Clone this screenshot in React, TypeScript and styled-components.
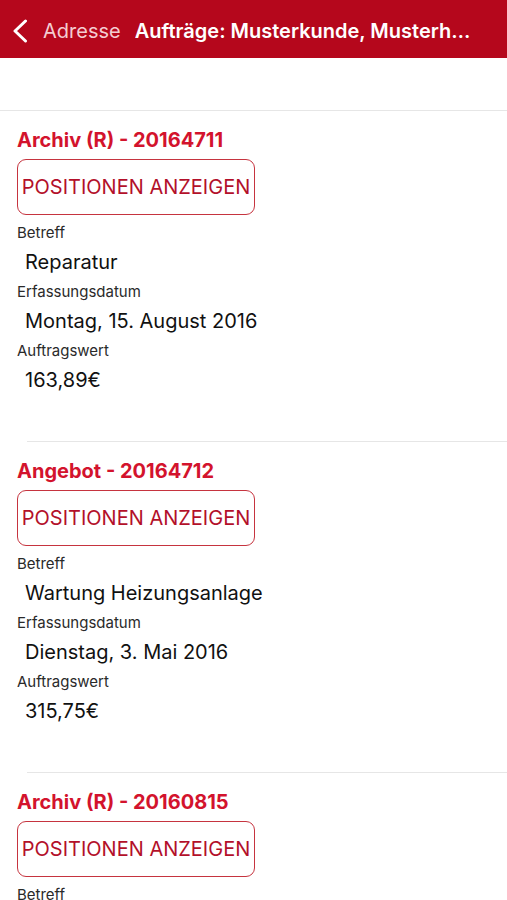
import { Fragment } from "react";
import styled, { createGlobalStyle } from "styled-components";

type Order = {
  id: string;
  kind: string;
  subject: string;
  date: string;
  value: string;
};

const orders: Order[] = [
  { id: "20164711", kind: "Archiv (R)", subject: "Reparatur", date: "Montag, 15. August 2016", value: "163,89€" },
  { id: "20164712", kind: "Angebot", subject: "Wartung Heizungsanlage", date: "Dienstag, 3. Mai 2016", value: "315,75€" },
  { id: "20160815", kind: "Archiv (R)", subject: "Inspektion", date: "Freitag, 12. Februar 2016", value: "98,40€" },
];

const GlobalStyle = createGlobalStyle`
  html, body {
    margin: 0;
    padding: 0;
    background: #ffffff;
    font-family: Inter, "Liberation Sans", sans-serif;
    -webkit-font-smoothing: antialiased;
  }
`;

const App = () => {
  return (
    <Screen>
      <GlobalStyle />
      <NavBar>
        <BackButton>
          <svg width="16" height="24" viewBox="0 0 16 24">
            <path d="M13.5 2 L3 12 L13.5 22" fill="none" stroke="#ffffff" strokeWidth="3" strokeLinecap="round" strokeLinejoin="round" />
          </svg>
          <span>Adresse</span>
        </BackButton>
        <NavTitle>Aufträge: Musterkunde, Musterhausen GmbH</NavTitle>
      </NavBar>

      <Spacer />

      <List>
        {orders.map((order, index) => (
          <Fragment key={order.id}>
            {index > 0 && <Divider />}
            <OrderItem>
              <OrderTitle>
                {order.kind} - {order.id}
              </OrderTitle>
              <OutlineButton>POSITIONEN ANZEIGEN</OutlineButton>
              <FieldLabel>Betreff</FieldLabel>
              <FieldValue>{order.subject}</FieldValue>
              <FieldLabel>Erfassungsdatum</FieldLabel>
              <FieldValue>{order.date}</FieldValue>
              <FieldLabel>Auftragswert</FieldLabel>
              <FieldValue>{order.value}</FieldValue>
            </OrderItem>
          </Fragment>
        ))}
      </List>
    </Screen>
  );
};

const Screen = styled.div`
  width: 507px;
  height: 900px;
  overflow: hidden;
  background: #ffffff;
`;

const NavBar = styled.header`
  height: 58px;
  background: #b5071c;
  display: flex;
  align-items: center;
  padding: 3px 31px 0 12px;
  box-sizing: border-box;
  gap: 14px;
  white-space: nowrap;
`;

const BackButton = styled.div`
  display: flex;
  align-items: center;
  gap: 15px;
  flex-shrink: 0;
  color: #f4cdd2;
  font-size: 20px;
  & svg {
    display: block;
  }
`;

const NavTitle = styled.h1`
  margin: 0;
  font-size: 20px;
  font-weight: 600;
  color: #ffffff;
  overflow: hidden;
  text-overflow: ellipsis;
  min-width: 0;
`;

const Spacer = styled.div`
  height: 52px;
  border-bottom: 1px solid #e6e6e6;
`;

const List = styled.div`
  display: flex;
  flex-direction: column;
`;

const Divider = styled.hr`
  margin: 0 0 0 27px;
  border: none;
  border-top: 1px solid #e6e6e6;
  height: 0;
`;

const OrderItem = styled.section`
  padding: 18px 0 41px 17px;
  display: flex;
  flex-direction: column;
  align-items: flex-start;
`;

const OrderTitle = styled.h2`
  margin: 0;
  font-size: 20px;
  line-height: 22px;
  font-weight: 700;
  color: #d3132d;
`;

const OutlineButton = styled.button`
  margin: 8px 0 8px;
  width: 238px;
  height: 56px;
  border: 1.5px solid #c6343f;
  border-radius: 9px;
  background: #ffffff;
  color: #b3102a;
  font-family: Inter, "Liberation Sans", sans-serif;
  font-size: 20px;
  padding: 0;
  text-align: center;
  white-space: nowrap;
`;

const FieldLabel = styled.div`
  font-size: 15px;
  line-height: 20px;
  color: #2a2a2a;
`;

const FieldValue = styled.div`
  font-size: 20px;
  line-height: 39px;
  color: #111111;
  padding-left: 8px;
`;

export default App;
